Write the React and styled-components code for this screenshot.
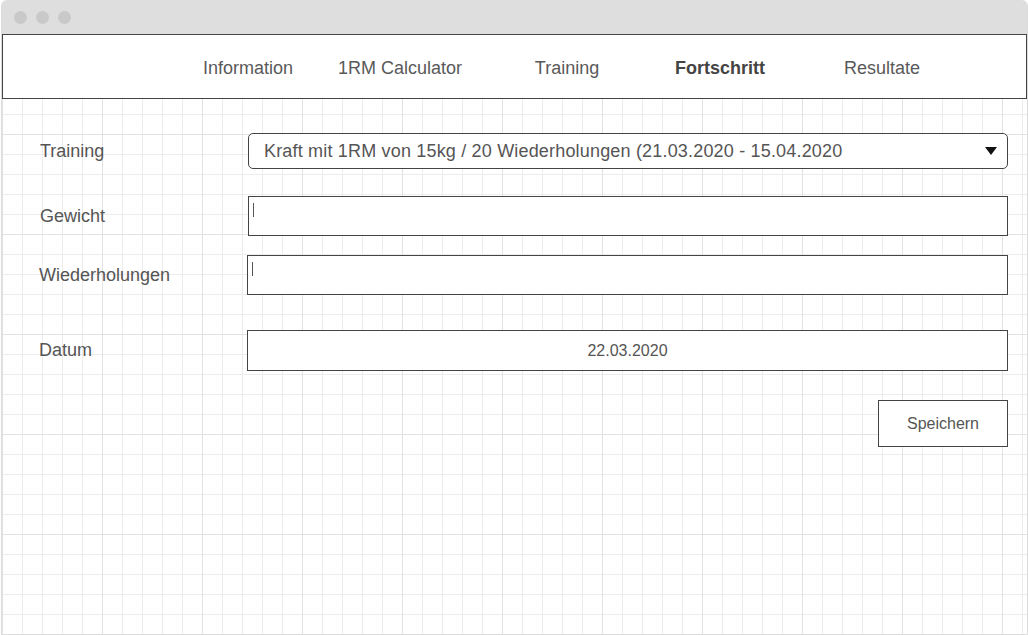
import React from 'react';
import styled, { createGlobalStyle } from 'styled-components';

const GlobalStyle = createGlobalStyle`
  html, body {
    margin: 0;
    padding: 0;
    background: #ffffff;
  }
  body {
    font-family: "Liberation Sans", Arial, sans-serif;
  }
`;

const Window = styled.div`
  margin-left: 1px;
  width: 1027px;
  height: 635px;
  box-sizing: border-box;
  border: 1px solid #dcdcdc;
  border-top: none;
  border-radius: 6px 6px 0 0;
  overflow: hidden;
  display: flex;
  flex-direction: column;
`;

const TitleBar = styled.div`
  height: 34px;
  flex: 0 0 34px;
  background: #dedede;
  display: flex;
  align-items: center;
  gap: 9px;
  padding-left: 12px;
  box-sizing: border-box;
`;

const Dot = styled.span`
  width: 13px;
  height: 13px;
  border-radius: 50%;
  background: #c9c9c9;
`;

const Canvas = styled.div`
  flex: 1;
  background-color: #ffffff;
  background-image:
    linear-gradient(to right, #e2e2e2 1px, transparent 1px),
    linear-gradient(to bottom, #e2e2e2 1px, transparent 1px),
    linear-gradient(to right, #ececec 1px, transparent 1px),
    linear-gradient(to bottom, #ececec 1px, transparent 1px);
  background-size: 100px 100px, 100px 100px, 20px 20px, 20px 20px;
  display: flex;
  flex-direction: column;
`;

const Nav = styled.nav`
  height: 65px;
  box-sizing: border-box;
  border: 1px solid #444444;
  background: #ffffff;
  display: flex;
  align-items: center;
  padding: 3px 0 0 169px;
`;

const NavItem = styled.div`
  width: ${p => p.$w}px;
  text-align: center;
  font-size: 18px;
  color: ${p => (p.$active ? '#444444' : '#595959')};
  font-weight: ${p => (p.$active ? 700 : 400)};
`;

const Form = styled.div`
  padding: 34px 0 0 38px;
  display: flex;
  flex-direction: column;
`;

const Row = styled.div`
  display: flex;
  align-items: center;
  margin-top: ${p => p.$top || 0}px;
  margin-left: ${p => p.$shift || 0}px;
`;

const Label = styled.div`
  width: 208px;
  font-size: 18px;
  color: #555555;
`;

const Select = styled.div`
  width: 760px;
  height: 36px;
  box-sizing: border-box;
  border: 1px solid #444444;
  border-radius: 5px;
  background: #ffffff;
  display: flex;
  align-items: center;
  justify-content: space-between;
  padding: 0 10px 0 15px;
  font-size: 18px;
  letter-spacing: 0.18px;
  color: #555555;
`;

const Arrow = styled.span`
  width: 0;
  height: 0;
  border-left: 6px solid transparent;
  border-right: 6px solid transparent;
  border-top: 8px solid #111111;
`;

const Field = styled.div`
  width: ${p => p.$w || 760}px;
  height: ${p => p.$h || 40}px;
  box-sizing: border-box;
  border: 1px solid #444444;
  background: #ffffff;
  padding: 6px 4px;
  display: flex;
  align-items: ${p => (p.$center ? 'center' : 'flex-start')};
  justify-content: ${p => (p.$center ? 'center' : 'flex-start')};
  font-size: 16px;
  color: #555555;
`;

const Caret = styled.span`
  width: 1px;
  height: 14px;
  background: #555555;
`;

const Actions = styled.div`
  display: flex;
  justify-content: flex-end;
  width: 968px;
  margin-top: 29px;
`;

const Button = styled.button`
  width: 130px;
  height: 47px;
  border: 1px solid #444444;
  background: #ffffff;
  font-family: "Liberation Sans", Arial, sans-serif;
  font-size: 16px;
  color: #555555;
  cursor: pointer;
`;

const navItems = [
  { label: 'Information', w: 152 },
  { label: '1RM Calculator', w: 152 },
  { label: 'Training', w: 182 },
  { label: 'Fortschritt', w: 124, active: true },
  { label: 'Resultate', w: 200 },
];

export default function App() {
  return (
    <>
      <GlobalStyle />
      <Window>
        <TitleBar>
          <Dot />
          <Dot />
          <Dot />
        </TitleBar>
        <Canvas>
          <Nav>
            {navItems.map(item => (
              <NavItem key={item.label} $w={item.w} $active={item.active}>
                {item.label}
              </NavItem>
            ))}
          </Nav>
          <Form>
            <Row>
              <Label>Training</Label>
              <Select>
                <span>Kraft mit 1RM von 15kg / 20 Wiederholungen (21.03.2020 - 15.04.2020</span>
                <Arrow />
              </Select>
            </Row>
            <Row $top={27}>
              <Label>Gewicht</Label>
              <Field><Caret /></Field>
            </Row>
            <Row $top={19} $shift={-1}>
              <Label>Wiederholungen</Label>
              <Field $w={761}><Caret /></Field>
            </Row>
            <Row $top={35} $shift={-1}>
              <Label>Datum</Label>
              <Field $w={761} $h={41} $center>22.03.2020</Field>
            </Row>
            <Actions>
              <Button>Speichern</Button>
            </Actions>
          </Form>
        </Canvas>
      </Window>
    </>
  );
}
